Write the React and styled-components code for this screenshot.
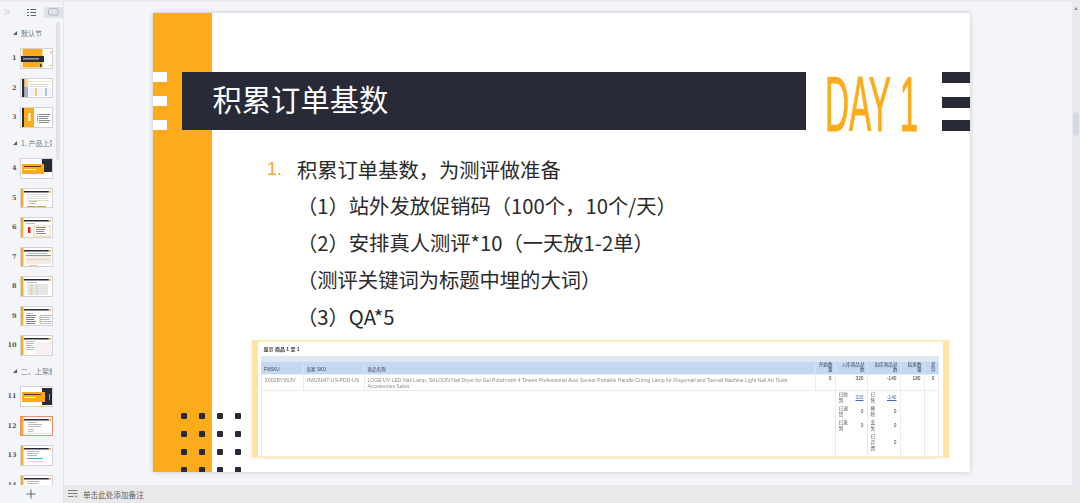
import React from "react";
import styled, { createGlobalStyle } from "styled-components";

const Global = createGlobalStyle`
  html, body { margin: 0; padding: 0; height: 100%; overflow: hidden; background: #f4f5f8; }
  #root { height: 100%; }
  * { box-sizing: border-box; }
`;
const CJK = `"Noto Sans CJK SC", "Liberation Sans", sans-serif`;
const DARK = "#282a37";
const ORANGE = "#fdab1a";

const Page = styled.div`
  width: 1080px; height: 503px; display: flex; overflow: hidden;
  background: #f4f5f8; font-family: ${CJK};
  border-top: 2px solid #e9eaed;
`;
const Sidebar = styled.aside`
  width: 64px; flex: none; display: flex; flex-direction: column; position: relative;
  border-right: 1px solid #e4e6eb; margin-top: -2px; padding-top: 2px;
`;
const TabBar = styled.div`
  height: 19px; flex: none; display: flex; align-items: center; padding-top: 1px;
`;
const Collapse = styled.span`
  width: 27px; padding-left: 4px; display: flex;
`;
const ListTab = styled.span`width: 17px; display: flex;`;
const SlideTab = styled.span`
  flex: 1; height: 11px; background: #dfe3e9; border-radius: 2px 0 0 2px; display: flex; align-items: center; justify-content: center;
  padding-right: 1px;
`;
const List = styled.div`
  flex: 1; overflow: hidden; padding-top: 5.5px; min-height: 0;
`;
const Section = styled.div`
  height: 21.5px; padding-bottom: 8px; padding-left: 13px; display: flex; align-items: center; gap: 4px;
  font-size: 7px; color: #74777e; white-space: nowrap; overflow: hidden; width: 52px;
`;
const Row = styled.div`
  height: 29.5px; display: flex; align-items: flex-start; position: relative;
`;
const Num = styled.span`
  width: 19.5px; padding-right: 3px; text-align: right; font-size: 6.5px; line-height: 20px; color: #55585f; font-weight: 700;
  font-family: "DejaVu Serif", serif;
`;
const Thumb = styled.div`
  width: 33.5px; height: 20.5px; background: #fff; overflow: hidden; display: flex;
  border: ${p => (p.$active ? "1px solid #f68b70" : "1px solid #d2d3d6")};
`;
const VScroll = styled.div`
  position: absolute; left: 56px; top: 22px; width: 4px; height: 138px; border-radius: 2px; background: #e1e3e7;
`;
const AddBar = styled.div`
  height: 18px; flex: none; display: flex; align-items: center; justify-content: center; color: #5b6c80; padding-right: 2px;
`;
const Main = styled.main`
  flex: 1; min-width: 0; display: flex; flex-direction: column;
`;
const Work = styled.div`
  flex: 1; min-height: 0; display: flex;
`;
const Canvas = styled.div`
  flex: 1; padding: 11px 0 0 89px;
`;
const RightBar = styled.div`
  width: 8px; flex: none; background: #e9eaef; position: relative; display: flex; justify-content: center;
`;
const UpArrow = styled.span`
  width: 0; height: 0; margin-top: 5px; border-left: 2px solid transparent; border-right: 2px solid transparent; border-bottom: 3px solid #8f97a8;
`;
const RightThumb = styled.span`
  position: absolute; left: 1px; top: 110px; width: 6px; height: 24px; border-radius: 3px; background: #d5d8e0;
`;
const Notes = styled.div`
  height: 18px; flex: none; background: #e9e9e9; display: flex; align-items: center; gap: 5px; padding-left: 4px;
  font-size: 7.6px; color: #5f6165;
`;
const Slide = styled.section`
  position: relative; width: 817px; height: 459px; background: #fff; overflow: hidden;
`;
const SlideWrap = styled.div`
  width: 817px; height: 459px; box-shadow: 0 0 5px rgba(0,0,0,.2);
`;
const Stripe = styled.div`
  position: absolute; left: 0; top: 0; bottom: 0; width: 58.5px; background: ${ORANGE};
`;
const Tick = styled.div`
  position: absolute; left: 0; top: ${p => p.$top}px; width: 14px; height: 10px; background: #fff;
`;
const RightTick = styled.div`
  position: absolute; right: 0; top: ${p => p.$top}px; width: 28px; height: 11px; background: ${DARK};
`;
const TitleBar = styled.div`
  position: absolute; left: 28.5px; top: 59px; width: 624px; height: 58px; background: ${DARK};
  color: #fff; font-size: 29.3px; line-height: 53px; padding-left: 31px; font-weight: 400;
`;
const Day = styled.div`
  position: absolute; left: 672px; top: 46px; font-family: "Liberation Sans", sans-serif; font-size: 78.5px; line-height: 90px;
  color: ${ORANGE}; transform: scaleX(.425); transform-origin: left top; white-space: nowrap;
  -webkit-text-stroke: 1px ${ORANGE};
`;
const Dot = styled.i`
  width: 6px; height: 6px; background: ${DARK}; border-radius: 1px; display: block;
`;
const Dots = styled.div`
  position: absolute; left: 28px; top: 400px; display: grid; grid-template-columns: repeat(4, 6px); gap: 12px;
`;
const Body = styled.div`
  position: absolute; left: 144px; top: 137.5px; font-size: 20.3px; line-height: 36.8px; color: #2a2a2a; white-space: nowrap;
`;
const Line = styled.div`position: relative;`;
const Marker = styled.span`
  position: absolute; left: -30px; color: ${ORANGE}; font-size: 18px; font-family: "Liberation Sans", sans-serif;
`;
const Frame = styled.div`
  position: absolute; left: 99px; top: 327px; width: 697px; height: 118px; background: #fff;
  border-style: solid; border-width: 2px 6.5px; border-color: #ffebc4 #fee2a6; box-shadow: 0 0 3px #ffeecd;
  padding: 4px 3px 0 2.5px; filter: blur(.5px);
`;
const Blur = styled.div`
  font-size: 4.8px; color: #333; line-height: 6px;
  font-family: "Liberation Sans", ${CJK};
`;
const Caption = styled.div`
  height: 9px; font-weight: 700; padding-left: 3px; font-size: 5px;
`;
const Table = styled.table`
  width: 677px; border-collapse: collapse; table-layout: fixed; margin-top: 1px;
`;
const Th = styled.th`
  height: 18px; background: linear-gradient(#dfe8f5 0 30%, #c4d8f1 35%); font-weight: 400; text-align: ${p => p.$r ? "right" : "left"};
  vertical-align: bottom; padding: 0 2px 1px 3px; border-right: 1px solid #d7e2f0; color: #3a4658; font-size: 4.6px; line-height: 5.5px;
`;
const Td = styled.td`
  height: ${p => p.$h}px; border: 1px solid #ececec; border-top-color: ${p => p.$noTop ? "transparent" : "#ececec"}; padding: 1px 3px; text-align: ${p => p.$r ? "right" : "left"};
  vertical-align: top; color: #333; overflow: hidden;
`;
const Smudge = styled.span`
  color: #8c8c8c; filter: blur(.7px); display: block; font-size: 5.1px; margin-top: 1px;
`;
const Sub = styled.div`
  display: grid; grid-template-columns: ${p => p.$label}px 1fr; row-gap: 2px;
`;
const SubLabel = styled.span`text-align: left; color: #555;`;
const SubVal = styled.span`
  text-align: right; align-self: center; color: ${p => p.$link ? "#3b6db5" : "#444"}; text-decoration: ${p => p.$link ? "underline" : "none"};
`;

const Tiny = styled.svg`display: block; flex: none; width: 100%; height: 100%; filter: blur(.3px);`;

function Content({ kind }) {
  const lines = (x, y, n, w = 10, c = "#a8aab0", step = 2) =>
    Array.from({ length: n }, (_, i) => <rect key={i + "l" + x + y} x={x} y={y + i * step} width={w - (i % 3)} height={0.8} fill={c} />);
  const base = (
    <>
      <rect x="0" y="0" width="2.4" height="19" fill={ORANGE} />
      <rect x="2.8" y="2" width="25" height="1.5" fill={DARK} />
      <rect x="28.5" y="2" width="1.5" height="2" fill={ORANGE} />
    </>
  );
  switch (kind) {
    case 1: return (<>
      <rect x="1.5" y="0" width="20" height="18.5" fill={ORANGE} />
      <rect x="0" y="7" width="23" height="6" fill={DARK} />
      {lines(2, 9.5, 1, 16, "#fff")}
      <rect x="29.5" y="2" width="1" height="3" fill={ORANGE} />
      <rect x="29" y="16" width="1.5" height="1" fill={ORANGE} />
      <rect x="19" y="15" width="1.5" height="3" fill={DARK} />
    </>);
    case 2: return (<>
      <rect x="1" y="0" width="2.5" height="19" fill={DARK} />
      <rect x="3.5" y="0" width="3.5" height="8" fill="#ffd27f" />
      <rect x="3.5" y="8" width="3.5" height="11" fill="#aab0bb" />
      <rect x="7" y="2" width="24" height="1" fill="#f8e6c8" />
      <rect x="7" y="9" width="24" height="8" fill="#f1f3f7" />
      <rect x="14" y="9" width="2" height="8" fill="#f7c88a" />
      <rect x="24" y="9" width="2" height="8" fill="#a9c4e8" />
      {lines(8, 5, 2, 20, "#d0d3da", 2)}
    </>);
    case 3: return (<>
      <rect x="1" y="0" width="2" height="19" fill={DARK} />
      <rect x="3" y="0" width="10" height="19" fill={ORANGE} />
      <rect x="7.5" y="5" width="2" height="8" fill="#fff" />
      {lines(18, 6, 5, 11, "#6a6c73", 2)}
      <rect x="16" y="6" width="1" height="8" fill={ORANGE} />
    </>);
    case 4: return (<>
      <rect x="21" y="0" width="11" height="13" fill={DARK} />
      <rect x="1" y="5" width="22" height="10" fill={ORANGE} />
      <rect x="3" y="7" width="17" height="1" fill="#553c10" />
      <rect x="3" y="10" width="12" height="1" fill="#fff" />
    </>);
    case 5: return (<>{base}{lines(6, 5, 4, 22, "#d0d2d6")}{lines(8, 12, 2, 8)}<rect x="6" y="17" width="9" height="1" fill="#caa040" /><rect x="16" y="17" width="9" height="1" fill="#caa040" /></>);
    case 6: return (<>{base}{lines(5, 5, 1, 9)}<rect x="7" y="9" width="2.5" height="6" fill="#f5141e" /><rect x="13" y="8" width="16" height="10" fill="none" stroke="#f3b04a" strokeWidth=".6" />{lines(15, 9, 4, 10, "#6a6c73")}</>);
    case 7: return (<>{base}{lines(6, 5, 1, 20)}<rect x="5" y="7" width="25" height="1" fill="#75ac7e" /><rect x="5" y="8" width="25" height="8" fill="#f3ece4" /><rect x="5" y="11" width="25" height=".6" fill="#e6b8a8" /><rect x="8" y="17" width="9" height=".8" fill="#f5c46a" /></>);
    case 8: return (<>{base}{lines(6, 5, 1, 10)}<rect x="6" y="7" width="21" height="11" fill="#e8e8e2" /><rect x="9" y="7" width="3" height="11" fill="#dfd9c4" /><rect x="15" y="7" width="2" height="11" fill="#cfdbe4" /></>);
    case 9: return (<>{base}{lines(6, 6, 1, 6)}{lines(5, 8, 5, 10, "#5a5c63")}<rect x="18" y="9" width="2" height="7" fill="#f9d98d" />{lines(19, 8, 5, 12, "#a6a8af")}</>);
    case 10: return (<>{base}{lines(5, 5, 5, 9)}<rect x="14" y="6" width="17" height="12" fill="#f8eff0" /></>);
    case 11: return (<>
      <rect x="21" y="1" width="11" height="17" fill={DARK} />
      <rect x="1" y="5" width="23" height="10" fill={ORANGE} />
      <rect x="3" y="7" width="17" height="1" fill="#553c10" />
      <rect x="3" y="10" width="12" height="1" fill="#fff" />
      <rect x="28" y="7" width="1" height="6" fill="#c89030" />
    </>);
    case 12: return (<>{base}{lines(6, 5, 1, 10)}{lines(7, 7, 2, 14, "#a5a7ad")}{lines(7, 12, 2, 6)}<rect x="5" y="16" width="25" height="1" fill="#dde8f4" /></>);
    case 13: return (<>{base}{lines(6, 5, 3, 12)}<rect x="6" y="12" width="16" height="1" fill="#38a6d8" />{lines(7, 15, 1, 16, "#d0d2d6")}</>);
    default: return (<>{base}{lines(6, 5, 3, 12)}</>);
  }
}

const SlideThumb = ({ n, active }) => (
  <Row>
    <Num>{n}</Num>
    <Thumb $active={active}>
      <Tiny viewBox="0 0 31.5 18.5"><Content kind={n} /></Tiny>
    </Thumb>
  </Row>
);
const Sec = ({ children }) => (
  <Section>
    <svg width="4" height="4" viewBox="0 0 4 4" style={{ flex: "none" }}><path d="M4 0V4H0Z" fill="#55585f" /></svg>
    <span>{children}</span>
  </Section>
);

export default function App() {
  return (
    <Page>
      <Global />
      <Sidebar>
        <TabBar>
          <Collapse>
            <svg width="6" height="6" viewBox="0 0 6 6" fill="none" stroke="#bcbfc6" strokeWidth=".8">
              <path d="M.5.5 3 3 .5 5.500M3 .5 5.500 3 3 5.500" />
            </svg>
          </Collapse>
          <ListTab>
            <svg width="9" height="9" viewBox="0 0 9 9" fill="none" stroke="#5c6370" strokeWidth="1">
              <path d="M0 1.500h2M3.500 1.500H9M0 4.500h2M3.500 4.500H9M0 7.500h2M3.500 7.500H9" />
            </svg>
          </ListTab>
          <SlideTab>
            <svg width="11" height="8" viewBox="0 0 11 8" fill="none" stroke="#b3b8c1" strokeWidth="1">
              <rect x=".5" y=".5" width="9.500" height="6.500" rx="1" />
            </svg>
          </SlideTab>
        </TabBar>
        <List>
          <Sec>默认节</Sec>
          {[1, 2, 3].map(n => <SlideThumb key={n} n={n} />)}
          <Sec>1. 产品上架</Sec>
          {[4, 5, 6, 7, 8, 9, 10].map(n => <SlideThumb key={n} n={n} />)}
          <Sec>二、上架前</Sec>
          {[11, 12, 13, 14].map(n => <SlideThumb key={n} n={n} active={n === 12} />)}
        </List>
        <AddBar>
          <svg width="10" height="10" viewBox="0 0 10 10" stroke="currentColor" strokeWidth="1"><path d="M5 .5v9M.5 5h9" /></svg>
        </AddBar>
        <VScroll />
      </Sidebar>
      <Main>
        <Work>
          <Canvas>
            <SlideWrap>
              <Slide>
                <Stripe />
                <Tick $top={59} /><Tick $top={83} /><Tick $top={107} />
                <TitleBar>积累订单基数</TitleBar>
                <Day>DAY 1</Day>
                <RightTick $top={59} /><RightTick $top={84} /><RightTick $top={107} />
                <Body>
                  <Line><Marker>1.</Marker>积累订单基数，为测评做准备</Line>
                  <Line>（1）站外发放促销码（100个，10个/天）</Line>
                  <Line>（2）安排真人测评*10（一天放1-2单）</Line>
                  <Line>（测评关键词为标题中埋的大词）</Line>
                  <Line>（3）QA*5</Line>
                </Body>
                <Dots>{Array.from({ length: 16 }, (_, i) => <Dot key={i} />)}</Dots>
                <Frame>
                  <Blur>
                    <Caption>显示 商品 1 至 1</Caption>
                    <Table>
                      <colgroup>
                        <col style={{ width: 42 }} /><col style={{ width: 61 }} /><col style={{ width: 451 }} />
                        <col style={{ width: 20 }} /><col style={{ width: 32 }} /><col style={{ width: 33 }} />
                        <col style={{ width: 24 }} /><col style={{ width: 14 }} />
                      </colgroup>
                      <thead>
                        <tr>
                          <Th>FNSKU</Th><Th>卖家 SKU</Th><Th>商品名称</Th>
                          <Th $r>开始数量</Th><Th $r>入库商品总数</Th><Th $r>出库商品总数</Th><Th $r>结束数量</Th><Th $r>差异</Th>
                        </tr>
                      </thead>
                      <tbody>
                        <tr>
                          <Td $h={16}><Smudge>X002BY9S3V</Smudge></Td>
                          <Td $h={16}><Smudge>HW26047-US-PDD-US</Smudge></Td>
                          <Td $h={16}><Smudge>LOGE UV LED Nail Lamp, SALOON Nail Dryer for Gel Polish with 4 Timers Professional Auto Sensor Portable Handle Curing Lamp for Fingernail and Toenail Machine Light Nail Art Tools Accessories Salon</Smudge></Td>
                          <Td $h={16} $r>0</Td><Td $h={16} $r>320</Td><Td $h={16} $r>-140</Td><Td $h={16} $r>180</Td><Td $h={16} $r>0</Td>
                        </tr>
                        <tr>
                          <Td $h={68} colSpan={4} $noTop />
                          <Td $h={68}>
                            <Sub $label={11}>
                              <SubLabel>已收到</SubLabel><SubVal $link>320</SubVal>
                              <SubLabel>已退货</SubLabel><SubVal>0</SubVal>
                              <SubLabel>已发到</SubLabel><SubVal>0</SubVal>
                            </Sub>
                          </Td>
                          <Td $h={68}>
                            <Sub $label={5}>
                              <SubLabel>已售</SubLabel><SubVal $link>-140</SubVal>
                              <SubLabel>移除</SubLabel><SubVal>0</SubVal>
                              <SubLabel>丢失</SubLabel><SubVal>0</SubVal>
                              <SubLabel>已弃置</SubLabel><SubVal>0</SubVal>
                            </Sub>
                          </Td>
                          <Td $h={68} /><Td $h={68} />
                        </tr>
                      </tbody>
                    </Table>
                  </Blur>
                </Frame>
              </Slide>
            </SlideWrap>
          </Canvas>
          <RightBar><UpArrow /><RightThumb /></RightBar>
        </Work>
        <Notes>
          <svg width="10" height="8" viewBox="0 0 10 8" fill="none" stroke="#6d7076" strokeWidth=".9">
            <path d="M0 .5h9.500M0 3.500h9.500M0 6.500h5.500M7 5.500l1.200 1.500 1.300-1.500" />
          </svg>
          <span>单击此处添加备注</span>
        </Notes>
      </Main>
    </Page>
  );
}
